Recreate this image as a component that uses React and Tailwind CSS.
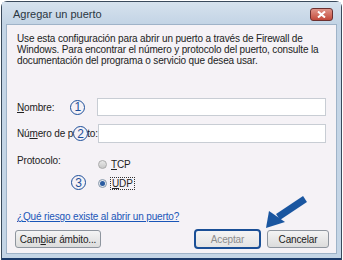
export default function App() {
  const font = { fontFamily: '"Liberation Sans", Arial, sans-serif' };
  const Circ = ({ n }) => (
    <span className="inline-flex items-center justify-center w-[15px] h-[15px] rounded-full border border-[#1d4f9a] bg-[#f5f2f6] text-[#1d4f9a] text-[12px] leading-none tracking-normal">{n}</span>
  );
  return (
    <div className="w-[343px] h-[260px] bg-white overflow-hidden" style={font}>
      <div className="relative h-[259px] rounded-t-[6px] border border-[#3a4a5c] border-b-0 bg-[#c4d5e6] flex flex-col ml-[1px] mt-[1px] w-[341px]">
        <div className="h-[22px] flex items-center justify-between pl-[11px] pr-[8px] bg-gradient-to-b from-[#d6e2ee] to-[#c3d4e5]">
          <span className="text-[11px] text-[#2a3642] mt-[3px]">Agregar un puerto</span>
          <div className="w-[23px] h-[13px] mt-[2px] rounded-[3px] border border-[#6b3030] bg-gradient-to-b from-[#e0958a] to-[#c2483a] flex items-center justify-center">
            <svg width="9" height="7" viewBox="0 0 9 7"><path d="M1 0.5 L8 6.5 M8 0.5 L1 6.5" stroke="white" strokeWidth="2" /></svg>
          </div>
        </div>
        <div className="flex-1 mx-[4px] border border-[#9fb3c8] bg-[#f5f2f6] flex flex-col px-[10px] pt-[8px] text-[10px] tracking-[-0.15px] text-[#222] whitespace-nowrap">
          <p className="leading-[11px]">Use esta configuración para abrir un puerto a través de Firewall de<br />Windows. Para encontrar el número y protocolo del puerto, consulte la<br />documentación del programa o servicio que desea usar.</p>
          <div className="mt-[32px] flex items-center h-[18px]">
            <span className="w-[54px]"><u>N</u>ombre:</span>
            <Circ n="1" />
            <div className="ml-[12px] w-[231px] h-[18px] bg-white border border-[#c8cdd4]" />
          </div>
          <div className="mt-[8px] flex items-center h-[19px] relative">
            <span className="w-[81px]">Nú<u>m</u>ero de puerto:</span>
            <span className="absolute left-[56px] top-[2px]"><Circ n="2" /></span>
            <div className="w-[231px] h-[19px] bg-white border border-[#c8cdd4]" />
          </div>
          <div className="mt-[10px] flex items-start h-[14px]">
            <span className="w-[81px]">Protocolo:</span>
            <div className="flex items-center gap-[4px] mt-[4px]">
              <span className="w-[9px] h-[9px] rounded-full border border-[#aaa] bg-gradient-to-b from-[#e8e8e8] to-[#c8c8c8]" />
              <span><u>T</u>CP</span>
            </div>
          </div>
          <div className="flex items-center mt-[8px] h-[16px]">
            <span className="ml-[54px] w-[27px]"><Circ n="3" /></span>
            <span className="w-[9px] h-[9px] rounded-full border border-[#8a9aac] bg-[#e2e8ef] flex items-center justify-center"><span className="w-[5px] h-[5px] rounded-full bg-[#2a5ba0]" /></span>
            <span className="ml-[3px] border border-dotted border-[#333] px-[1px] leading-[11px]"><u>U</u>DP</span>
          </div>
          <a className="mt-[20px] text-[#1a56b8] underline leading-[11px]">¿Qué riesgo existe al abrir un puerto?</a>
          <div className="mt-[7px] flex items-center ml-[-2px] mr-[-3px]">
            <div className="w-[86px] h-[18px] rounded-[3px] border border-[#8e959e] bg-gradient-to-b from-[#f4f4f4] to-[#dcdcdc] flex items-center justify-center">Cam<u>b</u>iar ámbito...</div>
            <div className="ml-auto w-[67px] h-[20px] rounded-[4px] border-2 border-[#1a4f96] bg-gradient-to-b from-[#f4f4f4] to-[#e4e4e4] flex items-center justify-center text-[#8c8c8c]">Aceptar</div>
            <div className="ml-[6px] w-[62px] h-[18px] rounded-[3px] border border-[#8e959e] bg-gradient-to-b from-[#f4f4f4] to-[#dcdcdc] flex items-center justify-center">Cancelar</div>
          </div>
        </div>
        <div className="h-[4px]" />
        <div className="h-[2px] bg-[#1a3a6a]" />
        <svg className="absolute left-[262px] top-[193px]" width="45" height="36" viewBox="0 0 45 36">
          <path d="M41 4 L14 22" stroke="#1a56a0" strokeWidth="7" strokeLinecap="butt" />
          <path d="M2 33 L5 16 L21 27 Z" fill="#1a56a0" />
        </svg>
      </div>
    </div>
  );
}
